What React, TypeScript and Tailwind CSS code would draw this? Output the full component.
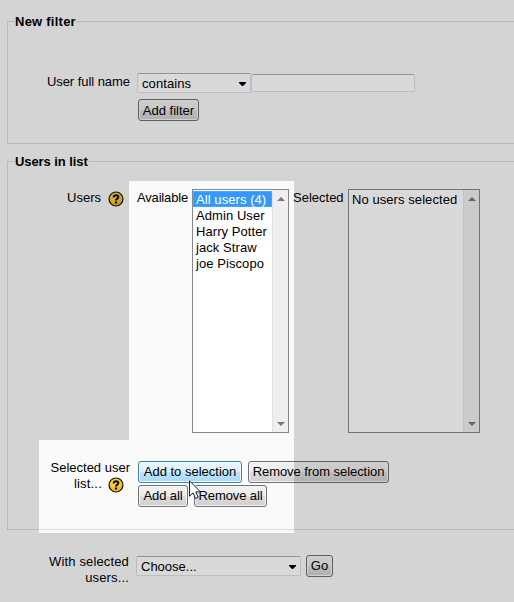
import React from 'react';

function HelpIcon() {
  return (
    <svg width="16" height="16" viewBox="0 0 16 16" className="block shrink-0">
      <defs>
        <radialGradient id="help" cx="0.4" cy="0.35" r="0.7">
          <stop offset="0" stopColor="#ffdc5c" />
          <stop offset="1" stopColor="#f0ac14" />
        </radialGradient>
      </defs>
      <circle cx="8" cy="8" r="7" fill="url(#help)" stroke="#111" strokeWidth="1.2" />
      <path d="M5.7 6.5C5.7 3.6 10.3 3.6 10.3 6.1C10.3 7.7 8 7.7 8 9.6" fill="none" stroke="#111" strokeWidth="2.1" />
      <rect x="6.9" y="10.5" width="2.2" height="2" fill="#111" />
    </svg>
  );
}

function Button({ label, className, active = false }: { label: string; className: string; active?: boolean }) {
  return (
    <button
      className={`block h-[22px] shrink-0 whitespace-nowrap rounded-[3px] border px-0 pb-0 text-center leading-[20px] ${
        active
          ? 'border-[#3c7fb1] bg-[linear-gradient(#eaf6fd_0%,#d9f0fc_50%,#bee6fd_50%,#a7d9f5_100%)] shadow-[inset_0_0_0_1px_#f4fbff]'
          : 'border-[#707070] bg-[linear-gradient(#f2f2f2_0%,#ebebeb_50%,#dddddd_50%,#cfcfcf_100%)] shadow-[inset_0_0_0_1px_#f5f5f5]'
      } ${className}`}
    >
      {label}
    </button>
  );
}

function Select({ label, className }: { label: string; className: string }) {
  return (
    <div
      className={`flex h-5 shrink-0 items-start justify-between rounded-[2px] border border-[#dcdfe6] border-t-[#abadb3] bg-white pr-1 pl-1 ${className}`}
    >
      <span className="pt-px leading-[18px]">{label}</span>
      <svg width="7" height="4" viewBox="0 0 7 4" className="mt-2">
        <path d="M0 0H7V1L4 4H3L0 1Z" fill="#000" />
      </svg>
    </div>
  );
}

function ListBox({ className, children }: { className: string; children: React.ReactNode }) {
  return (
    <div className={`flex h-[244px] shrink-0 border border-[#828790] bg-white ${className}`}>
      <div className="min-w-0 flex-1 pt-px tracking-[0.07px]">{children}</div>
      <div className="flex w-4 flex-col items-center justify-between border-l border-[#e3e3e3] bg-[#efefef] pt-[7px] pb-[6px]">
        <svg width="8" height="4" viewBox="0 0 8 4">
          <path d="M4 0L8 4H0Z" fill="#777" />
        </svg>
        <svg width="8" height="4" viewBox="0 0 8 4">
          <path d="M0 0H8L4 4Z" fill="#777" />
        </svg>
      </div>
    </div>
  );
}

const names = ['Admin User', 'Harry Potter', 'jack Straw', 'joe Piscopo'];

export default function App() {
  return (
    <div className="relative h-[602px] w-[514px] overflow-hidden bg-[#fafafa] pt-[13px] font-['Liberation_Sans',Arial,sans-serif] text-[13px] leading-4 text-black">
      <fieldset className="ml-[7px] h-[131px] w-[520px] border border-[#dbdbdb]">
        <legend className="ml-[7px] h-4 pt-px font-bold tracking-[0.24px]">New filter</legend>
        <div className="mt-11 flex">
          <div className="w-[122px] pt-px text-right tracking-[-0.05px]">User full name</div>
          <Select label="contains" className="ml-[7px] w-[114px] tracking-[0.1px]" />
          <div className="mt-px h-[18px] w-[164px] rounded-[2px] border border-[#dcdfe6] border-t-[#abadb3] bg-white" />
        </div>
        <Button label="Add filter" className="mt-[6px] ml-[130px] w-[61px] pt-px" />
      </fieldset>

      <fieldset className="mt-[9px] ml-[7px] h-[377px] w-[520px] border border-[#dbdbdb]">
        <legend className="ml-[7px] h-4 pt-px font-bold tracking-[-0.08px]">Users in list</legend>
        <div className="mt-5 flex">
          <div className="flex w-[116px] justify-end gap-[7px]">
            <span className="pt-px">Users</span>
            <div className="pt-[2px]"><HelpIcon /></div>
          </div>
          <span className="ml-[13px] w-[55px] pt-px tracking-[-0.17px]">Available</span>
          <ListBox className="w-[97px]">
            <div className="h-4 border border-dotted border-[#cc9966] bg-[#3399ff] pl-[2px] leading-4 whitespace-nowrap text-white">
              All users (4)
            </div>
            {names.map((name) => (
              <div key={name} className="h-4 pt-px pl-[3px] whitespace-nowrap">{name}</div>
            ))}
          </ListBox>
          <span className="ml-1 w-[55px] pt-px">Selected</span>
          <ListBox className="w-[132px]">
            <div className="h-4 pt-px pl-[3px] whitespace-nowrap">No users selected</div>
          </ListBox>
        </div>
        <div className="mt-7 flex">
          <div className="w-[122px] text-right">
            <div className="-mt-px">Selected user</div>
            <div className="mr-[6px] flex justify-end gap-[6px]">
              <span className="tracking-[0.2px]">list...</span>
              <div className="pt-px"><HelpIcon /></div>
            </div>
          </div>
          <div className="ml-2">
            <div className="flex gap-[6px]">
              <Button label="Add to selection" active className="w-[104px] pt-0" />
              <Button label="Remove from selection" className="w-[141px] pt-0 tracking-[-0.06px]" />
            </div>
            <div className="mt-[2px] flex gap-[6px]">
              <Button label="Add all" className="w-[50px] pt-0 tracking-[-0.08px]" />
              <Button label="Remove all" className="w-[73px] pt-0 tracking-[-0.1px]" />
            </div>
          </div>
        </div>
      </fieldset>

      <div className="mt-[25px] ml-7 flex">
        <div className="-mt-[2px] w-[101px] pt-px text-right tracking-[0.15px]">
          <div>With selected</div>
          <div>users...</div>
        </div>
        <Select label="Choose..." className="mt-px ml-[7px] w-[165px]" />
        <Button label="Go" className="ml-[5px] w-[27px] pt-0" />
      </div>

      <div className="absolute inset-0 bg-black/15 [clip-path:polygon(0_0,100%_0,100%_100%,0_100%,0_533px,294px_533px,294px_181px,129px_181px,129px_440px,39px_440px,39px_533px,0_533px)]" />

      <svg className="absolute top-[480px] left-[189px]" width="13" height="20" viewBox="0 0 13 20">
        <path d="M0.5 0.8V16.3L4.1 12.9L6.5 18.5L9.2 17.3L6.8 11.9H11.5Z" fill="#fff" stroke="#222" strokeWidth="1" />
      </svg>
    </div>
  );
}
